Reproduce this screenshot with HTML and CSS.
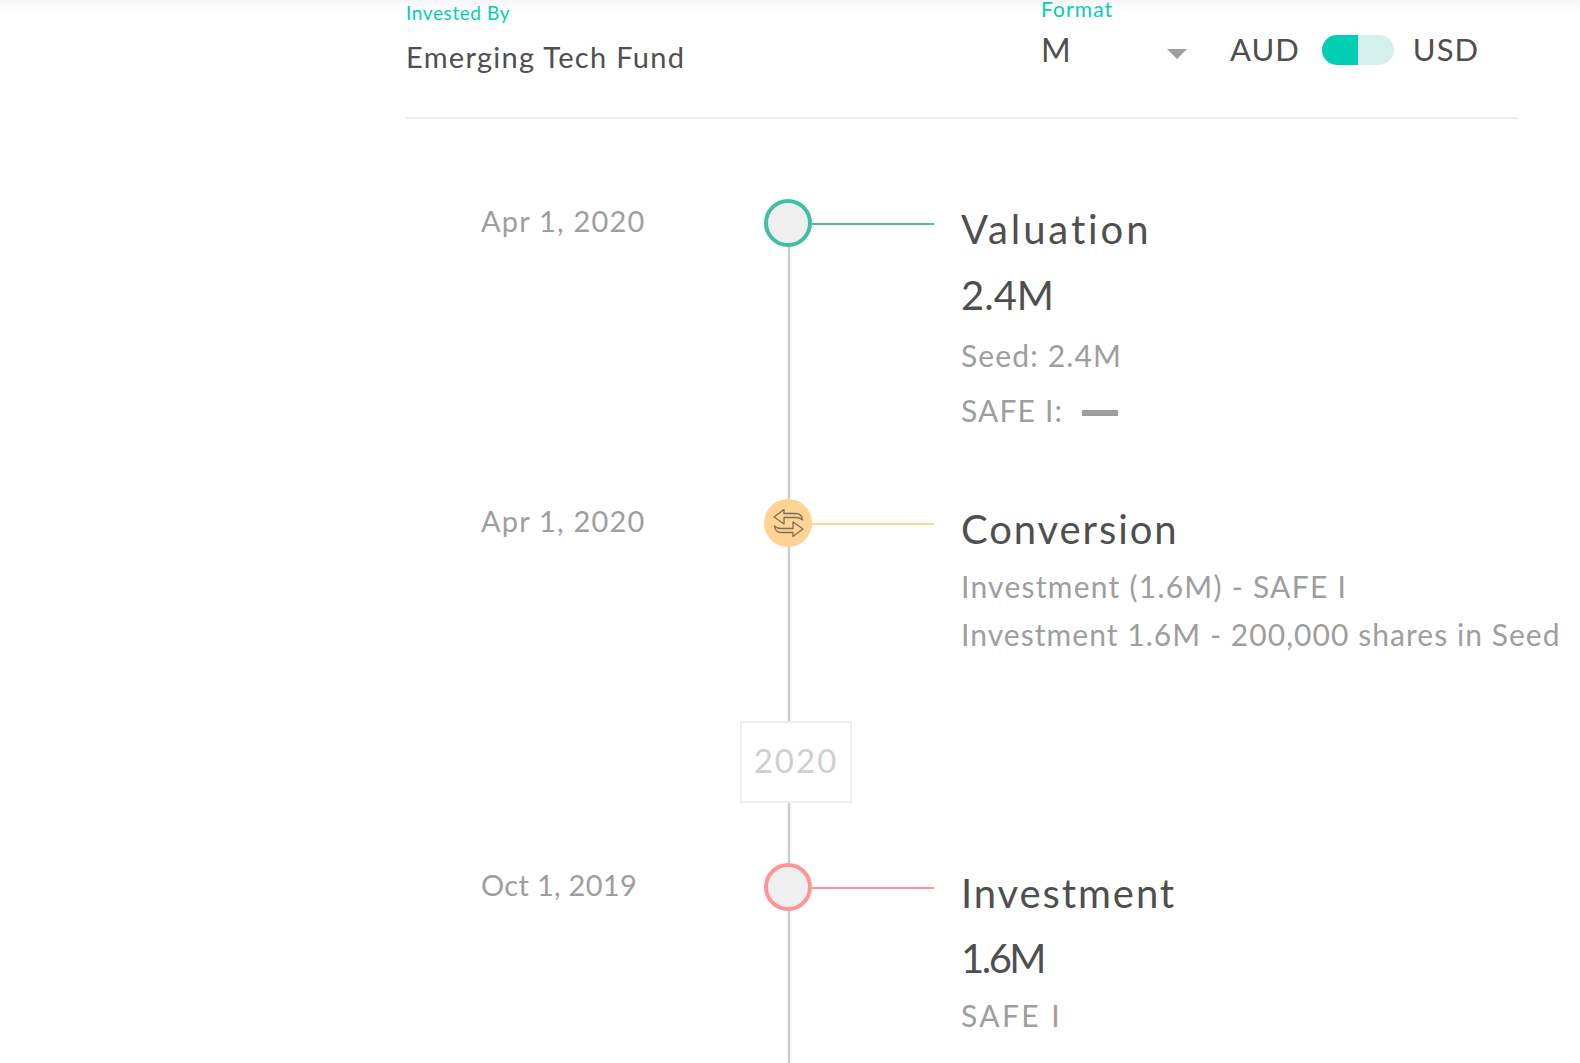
FILE: index.html
```html
<!DOCTYPE html>
<html lang="en">
<head>
<meta charset="utf-8">
<title>Investment timeline</title>
<link rel="stylesheet" href="styles.css">
</head>
<body>
<div class="page">
  <div class="top-shade"></div>
  <main class="content">
    <header class="header">
      <div class="field-investor">
        <div class="label">Invested By</div>
        <div class="investor-name">Emerging Tech Fund</div>
      </div>
      <div class="field-format">
        <div class="label label-format">Format</div>
        <div class="select">
          <span>M</span>
          <span class="caret"></span>
        </div>
      </div>
      <div class="currency">
        <span class="cur">AUD</span>
        <span class="toggle"><span class="toggle-on"></span></span>
        <span class="cur cur-usd">USD</span>
      </div>
    </header>
    <section class="timeline">
      <div class="rail"></div>
      <article class="event event-valuation">
        <div class="date">Apr 1, 2020</div>
        <div class="node node-green"></div>
        <div class="connector connector-green"></div>
        <div class="body">
          <h2 class="title title-wide">Valuation</h2>
          <div class="amount">2.4M</div>
          <div class="detail">Seed: 2.4M</div>
          <div class="detail">SAFE I: <span class="dash"></span></div>
        </div>
      </article>
      <article class="event event-conversion">
        <div class="date">Apr 1, 2020</div>
        <div class="node node-orange">
          <svg class="swap" viewBox="0 0 48 48" width="48" height="48" fill="none" stroke="#7a6f5a" stroke-width="1.3" stroke-linejoin="round">
            <path d="M10 18 L20 10.5 V14.5 H32 C36 14.5 38 17 38.5 21 C36.5 19 34.5 18.5 32 18.5 L20 18.5 V25 Z"/>
            <path d="M39 30 L29 37.5 V33.5 H17 C13 33.5 11 31 10.5 27 C12.5 29 14.5 29.5 17 29.5 L29 29.5 V23 Z"/>
          </svg>
        </div>
        <div class="connector connector-orange"></div>
        <div class="body">
          <h2 class="title">Conversion</h2>
          <div class="detail detail-tight">Investment (1.6M) - SAFE I</div>
          <div class="detail detail-tight2">Investment 1.6M - 200,000 shares in Seed</div>
        </div>
      </article>
      <div class="year">2020</div>
      <article class="event event-investment">
        <div class="date date-narrow">Oct 1, 2019</div>
        <div class="node node-red"></div>
        <div class="connector connector-red"></div>
        <div class="body">
          <h2 class="title">Investment</h2>
          <div class="amount amount-narrow">1.6M</div>
          <div class="detail detail-close">SAFE I</div>
        </div>
      </article>
    </section>
  </main>
</div>
</body>
</html>
```
FILE: styles.css
```css
* { box-sizing: border-box; }
html, body { margin: 0; padding: 0; background: #fff; }
body { font-family: "Lato", "Open Sans", sans-serif; color: #4f4f4f; }
.page { position: relative; width: 1580px; height: 1063px; overflow: hidden; background: #fff; }
.top-shade { position: absolute; top: 0; left: 0; right: 0; height: 12px; background: linear-gradient(#f6f6f6, #fff); }
.content { position: relative; margin: 0 62px 0 406px; }

.header { display: flex; height: 119px; border-bottom: 2px solid #eeeeee; }
.label { color: #00cfb4; font-size: 19px; line-height: 24px; letter-spacing: .6px; }
.field-investor { width: 635px; padding-top: 1px; }
.investor-name { margin-top: 12px; font-size: 29px; line-height: 40px; letter-spacing: 1.3px; }
.field-format { width: 191px; }
.label-format { font-size: 21px; line-height: 18px; letter-spacing: 1.1px; }
.select { display: flex; align-items: center; justify-content: space-between; width: 146px; margin-top: 12px; font-size: 32px; line-height: 40px; }
.caret { width: 0; height: 0; margin-top: 7px; border-left: 10px solid transparent; border-right: 10px solid transparent; border-top: 10px solid #9e9e9e; }
.currency { display: flex; align-items: center; gap: 20px; height: 40px; margin-top: 30px; margin-left: -2px; font-size: 31px; letter-spacing: 1px; }
.cur { margin-bottom: 2px; }
.cur:first-child { margin-right: 2px; }
.cur-usd { margin-left: -1px; }
.toggle { display: block; width: 72px; height: 30px; border-radius: 15px; background: #d5f0ec; overflow: hidden; }
.toggle-on { display: block; width: 36px; height: 30px; background: #00cfb4; }

.timeline { position: relative; padding-top: 80px; }
.rail { position: absolute; left: 382px; top: 104px; width: 2px; height: 900px; background: #cccccc; box-shadow: 0 0 3px rgba(0,0,0,.14); }
.event { position: relative; display: flex; align-items: flex-start; padding-left: 75px; }
.event-valuation { height: 300px; }
.event-conversion { height: 222px; }
.event-investment { margin-top: 60px; }

.date { flex: none; width: 283px; margin-top: 4px; font-size: 29px; line-height: 36px; color: #9e9e9e; letter-spacing: 1.2px; }
.date-narrow { letter-spacing: .3px; }
.node { position: relative; flex: none; width: 48px; height: 48px; border-radius: 50%; background: #efefef; border: 4px solid; }
.node-green { border-color: #41bfa3; }
.node-red { border-color: #ff9494; }
.node-orange { background: #ffd393; border: 0; }
.swap { display: block; }
.connector { flex: none; width: 122px; height: 2px; margin-top: 24px; }
.connector-green { background: #41bfa3; }
.connector-orange { background: #ffd393; }
.connector-red { background: #ff9494; }
.body { flex: none; margin-left: 27px; white-space: nowrap; }
.title { margin: 5px 0 0; font-size: 40px; font-weight: 400; line-height: 50px; letter-spacing: 1.9px; color: #4f4f4f; }
.title-wide { letter-spacing: 2.9px; }
.amount { margin-top: 16px; font-size: 40px; line-height: 50px; color: #4f4f4f; }
.amount-narrow { margin-top: 15px; letter-spacing: -2.5px; }
.detail { margin-top: 15px; font-size: 30px; line-height: 40px; color: #9e9e9e; letter-spacing: 1.15px; }
.detail-tight { margin-top: 12px; letter-spacing: 1.25px; }
.detail-tight2 { margin-top: 8px; letter-spacing: 1.05px; }
.detail-close { margin-top: 12px; letter-spacing: 2.4px; }
.dash { display: inline-block; width: 36px; height: 6px; margin-left: 10px; background: #9e9e9e; vertical-align: 6px; }
.year { position: relative; width: 112px; height: 82px; margin-left: 334px; border: 2px solid #eeeeee; background: #fff; color: #cfcfcf; font-size: 33px; line-height: 74px; text-align: center; letter-spacing: 2px; }
```
